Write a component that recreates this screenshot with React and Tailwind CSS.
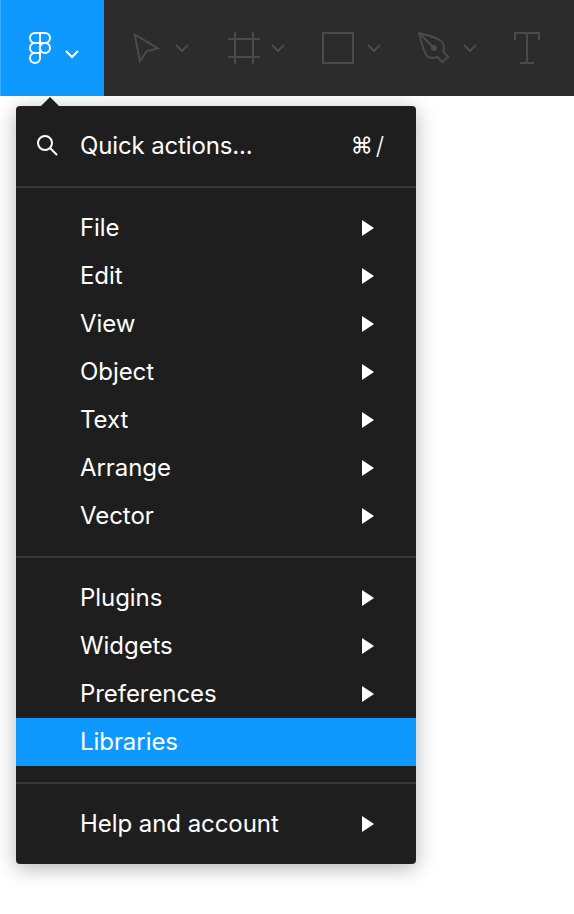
import React from "react";

const sections = [
    [
        { name: "File", submenu: true },
        { name: "Edit", submenu: true },
        { name: "View", submenu: true },
        { name: "Object", submenu: true },
        { name: "Text", submenu: true },
        { name: "Arrange", submenu: true },
        { name: "Vector", submenu: true }
    ],
    [
        { name: "Plugins", submenu: true },
        { name: "Widgets", submenu: true },
        { name: "Preferences", submenu: true },
        { name: "Libraries", active: true }
    ],
    [{ name: "Help and account", submenu: true }]
];

const tools = [
    { name: "Move", icon: <path d="M4.8 2.6 28 16.4 16.6 19.2 9.9 29.2Z" />, dropdown: true },
    { name: "Frame", icon: <path d="M9 0V32M27 0V32M2 7H34M2 25H34" />, dropdown: true },
    { name: "Rectangle", icon: <path d="M1 1H31V31H1Z" />, dropdown: true },
    {
        name: "Pen",
        icon: (
            <>
                <path d="M1 1C10 3.2 18 5.4 22 8.2C26 11 26.6 15.6 25 19.4L30 24.6L24.4 30L19.6 25C15 26.8 10.4 26.2 7.8 22C5 17.6 3.2 9.8 1 1Z" />
                <path d="M1 1 16 16" />
                <circle cx="16" cy="16" r="3" fill="currentColor" stroke="none" />
            </>
        ),
        dropdown: true
    },
    { name: "Text", icon: <path d="M1 8V1H25V8M13 1V31M6 31H20" /> }
];

const Chevron = ({ className }) => (
    <svg className={`h-2.5 w-3.5 shrink-0 ${className}`} viewBox="0 0 14 10" fill="none" stroke="currentColor" strokeWidth="2">
        <path d="M1 2 7 8 13 2" />
    </svg>
);

const Toolbar = () => (
    <header className="relative z-10 flex h-24 bg-[#2c2c2c] text-[#4b4b4b]">
        <button className="flex w-26 shrink-0 items-center border-l border-[#3dacff] bg-[#0d99ff] pl-[27px] text-white">
            <svg className="h-8 w-6 shrink-0" viewBox="0 0 24 32" fill="none" stroke="currentColor" strokeWidth="2">
                <path d="M12 1H7a5 5 0 0 0 0 10H12ZM12 1H17a5 5 0 0 1 0 10H12ZM12 11H7a5 5 0 0 0 0 10H12ZM12 21H7a5 5 0 1 0 5 5Z" />
                <circle cx="17" cy="16" r="5" />
            </svg>
            <Chevron className="mt-3 ml-[13px]" />
        </button>
        {tools.map((tool) => (
            <button key={tool.name} aria-label={tool.name} className="flex w-24 shrink-0 items-center pl-[26px]">
                <svg className="h-8 w-[34px] shrink-0" viewBox="0 0 34 32" fill="none" stroke="currentColor" strokeWidth="2">
                    {tool.icon}
                </svg>
                {tool.dropdown && <Chevron className="ml-[11px]" />}
            </button>
        ))}
    </header>
);

const MenuItem = ({ item }) => (
    <li className={`flex h-12 items-center justify-between pr-[42px] pl-16 ${item.active ? "bg-[#0d99ff]" : ""}`}>
        <span>{item.name}</span>
        {item.submenu && (
            <svg className="h-4 w-3" viewBox="0 0 12 16" fill="currentColor">
                <path d="M0 0 12 8 0 16Z" />
            </svg>
        )}
    </li>
);

const App = () => {
    return (
        <div className="h-[914px] w-[574px] overflow-hidden bg-white font-['Inter',sans-serif] antialiased">
            <Toolbar />

            {/* Main menu */}
            <nav className="relative z-20 mt-2.5 ml-4 w-100 rounded bg-[#1e1e1e] text-2xl tracking-[-0.06px] text-white">
                <div className="absolute inset-0 -z-10 rounded shadow-[0_4px_20px_rgba(0,0,0,0.3)] [clip-path:inset(-10px_-50px_-50px_-50px)]"></div>
                <svg className="absolute -top-[9px] left-[25px] h-2.5 w-[18px]" viewBox="0 0 18 10" fill="#1e1e1e">
                    <path d="M0 9 9 0 18 9V10H0Z" />
                </svg>

                <div className="flex h-20 items-center pr-8 pl-5">
                    <svg className="h-6 w-6 shrink-0" viewBox="0 0 24 24" fill="none" stroke="currentColor" strokeWidth="2">
                        <circle cx="9" cy="9" r="7" />
                        <path d="M14 14 21 21" />
                    </svg>
                    <span className="ml-5 tracking-[-0.14px]">Quick actions...</span>
                    <span className="ml-auto flex items-center gap-[3px]">
                        <span className="text-[22px]">⌘</span>
                        <span className="font-light">/</span>
                    </span>
                </div>

                {sections.map((items) => (
                    <ul key={items[0].name} className="border-t-2 border-[#383838] py-4">
                        {items.map((item) => (
                            <MenuItem key={item.name} item={item} />
                        ))}
                    </ul>
                ))}
            </nav>
        </div>
    );
};

export default App;
